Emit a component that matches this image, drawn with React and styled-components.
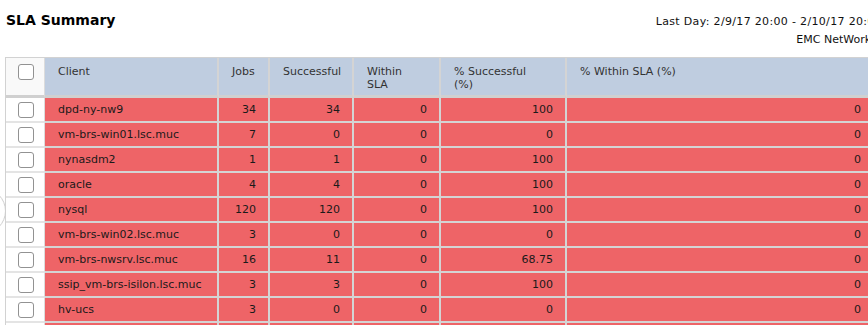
import React from "react";
import styled, { createGlobalStyle } from "styled-components";

const Global = createGlobalStyle`
  html, body {
    margin: 0;
    padding: 0;
    background: #fff;
    overflow: hidden;
  }
  body {
    font-family: Verdana, "DejaVu Sans", sans-serif;
  }
`;

const Page = styled.div`
  position: relative;
  width: 890px;
`;

const Header = styled.div`
  display: flex;
  justify-content: space-between;
  align-items: flex-start;
  height: 57px;
  padding: 0 8px 0 6px;
`;

const Title = styled.h1`
  margin: 12px 0 0;
  font-size: 14px;
  line-height: 17px;
  font-weight: bold;
  color: #000;
`;

const Meta = styled.div`
  padding-top: 13px;
  text-align: right;
  font-size: 11px;
  line-height: 18px;
  color: #111;
`;

const MetaLine = styled.div`
  letter-spacing: ${(p) => (p.$wide ? "0.33px" : "0")};
`;

const TableWrap = styled.div`
  padding-left: 5px;
`;

const Table = styled.table`
  width: 870px;
  table-layout: fixed;
  border-collapse: separate;
  border-spacing: 0;
  border-top: 1px solid #d2d2d2;
  border-left: 1px solid #d2d2d2;
  font-size: 11px;
`;

const Th = styled.th`
  height: 40px;
  box-sizing: border-box;
  padding: ${(p) => (p.$check ? "6px 0 0 0" : "7px 12px 0 13px")};
  vertical-align: top;
  text-align: left;
  font-weight: normal;
  line-height: 13px;
  color: #333;
  background: ${(p) => (p.$check ? "#f9f9f9" : "#bfcde0")};
  border-right: ${(p) => (p.$check ? "1px solid #dcdcdc" : "2px solid #d4d4d4")};
  border-bottom: 3px solid #d0d0d0;
`;

const Td = styled.td`
  height: 25px;
  box-sizing: border-box;
  padding: 0 12px 0 13px;
  vertical-align: middle;
  text-align: ${(p) => (p.$num ? "right" : "left")};
  white-space: nowrap;
  color: #1a1a1a;
  background: #ee6467;
  border-right: 2px solid #d4d4d4;
  border-bottom: 2px solid #d4d4d4;
`;

const CheckTd = styled.td`
  height: 25px;
  box-sizing: border-box;
  padding: 0;
  background: #fff;
  border-right: 1px solid #dcdcdc;
  border-bottom: 2px solid #e4e4e4;
  vertical-align: middle;
`;

const Box = styled.span`
  display: block;
  width: 16px;
  height: 16px;
  box-sizing: border-box;
  margin-left: 12px;
  border: 1px solid #929292;
  border-radius: 3px;
  background: #fff;
`;

const Knob = styled.div`
  position: absolute;
  left: -40px;
  top: 188px;
  width: 44px;
  height: 44px;
  border: 1px solid #cfcfcf;
  border-radius: 50%;
`;

const columns = [
  ["Client"],
  ["Jobs"],
  ["Successful"],
  ["Within", "SLA"],
  ["% Successful", "(%)"],
  ["% Within SLA (%)"],
];

const rows = [
  ["dpd-ny-nw9", "34", "34", "0", "100", "0"],
  ["vm-brs-win01.lsc.muc", "7", "0", "0", "0", "0"],
  ["nynasdm2", "1", "1", "0", "100", "0"],
  ["oracle", "4", "4", "0", "100", "0"],
  ["nysql", "120", "120", "0", "100", "0"],
  ["vm-brs-win02.lsc.muc", "3", "0", "0", "0", "0"],
  ["vm-brs-nwsrv.lsc.muc", "16", "11", "0", "68.75", "0"],
  ["ssip_vm-brs-isilon.lsc.muc", "3", "3", "0", "100", "0"],
  ["hv-ucs", "3", "0", "0", "0", "0"],
  ["vm-brs-exch01.lsc.muc", "2", "2", "0", "100", "0"],
];

export default function App() {
  return (
    <Page>
      <Global />
      <Header>
        <Title>SLA Summary</Title>
        <Meta>
          <MetaLine $wide>Last Day: 2/9/17 20:00 - 2/10/17 20:00</MetaLine>
          <MetaLine>EMC NetWorker</MetaLine>
        </Meta>
      </Header>
      <TableWrap>
        <Table>
          <colgroup>
            <col style={{ width: 39 }} />
            <col style={{ width: 174 }} />
            <col style={{ width: 51 }} />
            <col style={{ width: 84 }} />
            <col style={{ width: 87 }} />
            <col style={{ width: 126 }} />
            <col />
          </colgroup>
          <thead>
            <tr>
              <Th $check>
                <Box />
              </Th>
              {columns.map((lines) => (
                <Th key={lines.join(" ")}>
                  {lines.map((l, i) => (
                    <div key={i}>{l}</div>
                  ))}
                </Th>
              ))}
            </tr>
          </thead>
          <tbody>
            {rows.map((r) => (
              <tr key={r[0]}>
                <CheckTd>
                  <Box />
                </CheckTd>
                <Td>{r[0]}</Td>
                {r.slice(1).map((v, i) => (
                  <Td $num key={i}>
                    {v}
                  </Td>
                ))}
              </tr>
            ))}
          </tbody>
        </Table>
      </TableWrap>
      <Knob />
    </Page>
  );
}
